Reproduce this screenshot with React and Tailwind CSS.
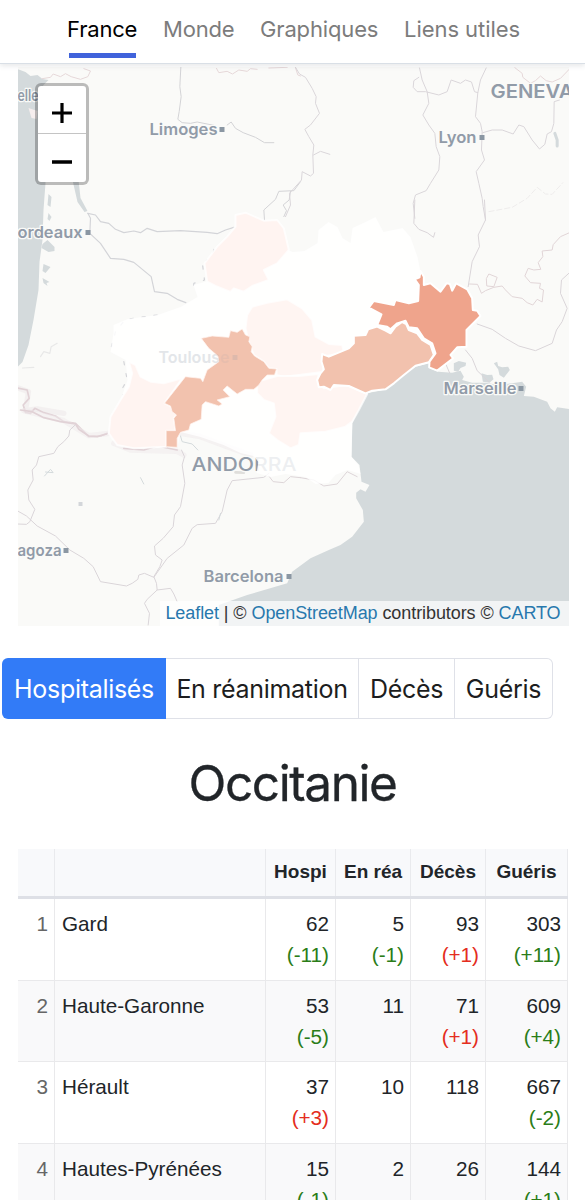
import React from "react";

const navItems = [
  { label: "France", active: true, cls: "w-[70px] tracking-[-0.2px]" },
  { label: "Monde", cls: "w-[71px] tracking-[-0.2px]" },
  { label: "Graphiques", cls: "w-[118px] tracking-[-0.15px]" },
  { label: "Liens utiles", cls: "w-[116px] tracking-[-0.05px]" },
];

const tabs = [
  { label: "Hospitalisés", cls: "w-[164px] rounded-l-md bg-[#327bf7] text-white" },
  { label: "En réanimation", cls: "w-[193px] border-y-[1.5px] border-r-[1.5px] border-[#dfe1e8]" },
  { label: "Décès", cls: "w-[96px] border-y-[1.5px] border-r-[1.5px] border-[#dfe1e8]" },
  { label: "Guéris", cls: "w-[98px] rounded-r-md border-y-[1.5px] border-r-[1.5px] border-[#dfe1e8]" },
];

const G = "text-[#2b7d18]";
const R = "text-[#e42d20]";

const rows = [
  ["Gard", ["62", "(-11)", G], ["5", "(-1)", G], ["93", "(+1)", R], ["303", "(+11)", G]],
  ["Haute-Garonne", ["53", "(-5)", G], ["11"], ["71", "(+1)", R], ["609", "(+4)", G]],
  ["Hérault", ["37", "(+3)", R], ["10"], ["118"], ["667", "(-2)", G]],
  ["Hautes-Pyrénées", ["15", "(-1)", G], ["2"], ["26"], ["144", "(+1)", G]],
];

const gridCols = "grid grid-cols-[37px_211px_70px_75px_75px_82px]";

function Place({ x, y, w, size = 16, children, anchorX, weight = 600 }) {
  return (
    <>
      <text
        x={x}
        y={y}
        fontSize={size}
        fontWeight={weight}
        textLength={w}
        lengthAdjust="spacingAndGlyphs"
        fill="#919ba8"
        stroke="#fafaf8"
        strokeWidth="2.5"
        paintOrder="stroke"
      >
        {children}
      </text>
      {anchorX && <rect x={anchorX} y={y - 8} width="5" height="5" fill="#8b97a3" />}
    </>
  );
}

function RegionMap() {
  return (
    <svg
      viewBox="17.5 67 551 559"
      className="block h-full w-full"
      fontFamily="Inter, 'Open Sans', sans-serif"
      strokeLinejoin="round"
      strokeLinecap="round"
    >
      <rect x="17" y="67" width="552" height="559" fill="#fafaf8" />

      {/* Atlantic, estuary and lakes */}
      <g fill="#d4dadc">
        <path d="M17 69L25 72L30 76L37 75L42 79L48 80L43 85L38 95L45 183L43 210L42 240L39 262L38 290L33 320L28 345L22 362L17 367Z" />
        <path d="M72 180L78 180L80 198L87 211L84 212L77 202Z" />
        <path d="M48 194L51 197L50 207L47 205ZM48 213L51 217L49 221L47 219ZM42 244L47 240L54 247L54 251L48 252L41 248ZM43 264L50 267L45 273L42 271ZM42 278L49 282L46 283L47 286L43 283Z" />
      </g>
      <path d="M28 108L37 111L36 119L31 118Z" fill="#f6eeee" />

      {/* Mediterranean */}
      <g transform="translate(285 200) scale(.33333)" fill="#d4dadc">
        <path d="M200 670L230 610L245 580L300 568L355 525L390 500L430 490L432 505L458 515L500 518L525 512L535 530L530 540L560 548L600 548L640 555L690 548L710 545L722 560L715 588L745 590L785 605L795 625L808 635L815 622L855 628V1278H-200L-200 1215L-115 1185L5 1150L20 1115L75 1075L130 1050L165 1035L200 1010L235 965L232 930L212 895L212 878L225 868L240 875L252 855L228 845L222 795L198 770Z" />
        <path d="M505 490L520 483L542 488L540 498L525 504L518 515L505 512ZM588 520L605 525L620 524L624 538L612 548L592 545ZM625 490L635 485L638 498L650 502L668 500L673 510L655 533L642 525L638 508Z" />
      </g>

      {/* Rivers and borders */}
      <g fill="none" stroke="#d3d3d6" strokeWidth="3" transform="translate(0 0) scale(.33333)">
        <path d="M541 202L538 260L542 290L536 335L532 358L545 368L570 370L590 366L640 376M680 375L692 366L705 385L728 398L765 412L792 428L820 428" />
        <path stroke="#e6d8d9" d="M125 236L150 232L158 222L180 230L195 221L212 230L240 238L262 230L270 213L250 206M648 205L655 218L680 214L696 222L715 210L740 214L750 206L770 208M805 204L860 202M885 203L892 225L900 228" />
        <path d="M900 545L880 572L835 574L825 598L790 630L792 660M870 574L866 600L848 615L858 632L850 650" />
      </g>
      <g fill="none" stroke="#dad6da" strokeWidth="3" transform="translate(285 0) scale(.33333)">
        <path d="M30 202L42 222L60 232L80 265L92 290L90 310L102 340L75 375L58 388L70 410L85 435L82 465L84 520L75 528L50 515L48 540L12 580L15 615L0 650M84 465L105 454L133 463" />
        <path d="M402 204L410 240L425 275L430 310L412 345L430 375L448 400L452 440L463 470L460 510L435 550L422 572L390 585L383 610L388 655" />
        <path d="M400 232L385 242L383 262L395 275L420 275L460 285L485 275L497 240L525 250L540 240L558 246L567 275L577 278L585 240L602 204M577 278L570 350L585 370L590 395L588 450L597 480L572 515L580 550L590 595L593 620L600 660" />
        <path d="M592 398L620 390L650 390L683 402L700 375L715 380L740 420L762 447L778 433L785 402L798 395L805 370L806 305L822 300" />
        <path stroke="#e6d8d9" d="M688 203L710 220L712 232L735 250L750 242L765 228L782 242L800 246L825 235L852 207" />
        <path stroke="#d4dadc" strokeWidth="9" d="M808 400L815 420L815 438" />
        <path stroke="#eeecec" strokeDasharray="16 8" d="M610 635L680 622L725 595L755 562L780 582L800 583L832 548" />
      </g>
      <g fill="none" stroke="#d3d4d8" strokeWidth="3.5" transform="translate(0 200) scale(.33333)">
        <path d="M262 40L285 45L300 65L325 70L345 88L370 98L400 93L420 98L440 85L470 95L540 92L620 97L650 101L675 90L700 82" />
        <path d="M262 40L270 55L268 100L300 130L330 175L370 178L400 187L452 230L462 275L500 280L530 298L556 308" />
        <path strokeDasharray="10 26" d="M640 148L635 175L605 185L612 240L580 250L578 270M470 345L375 358L345 395L330 450M370 485L380 540L360 575L372 592" />
        <path stroke="#ebe5e7" strokeWidth="16" d="M54 564L84 575L75 632L110 627L190 640" opacity=".45" />
        <path stroke="#e1d2d6" strokeWidth="5" d="M50 564L80 570L86 595L68 615L75 637L90 640L103 625L130 638L165 648L190 665L225 670L265 710L300 708L320 700" />
        <path stroke="#e8e8e8" d="M66 504L100 502M120 470L130 455L148 460L152 440L170 430" />
      </g>
      <g fill="none" stroke="#dad5d9" strokeWidth="3" transform="translate(285 200) scale(.33333)">
        <path d="M388 0L385 70L400 88L425 98L444 112L448 98M597 0L600 60L578 105L582 140L560 185L548 260" />
        <path stroke="#e1d5d7" d="M852 98L825 110L803 134L800 150L770 153L772 170L758 188L766 208L745 210L728 205L718 228L735 248L765 250L762 265L774 270L770 306L755 298L742 315L725 308L710 295L680 290L660 270L650 258L625 262L600 272L588 280L576 253L552 252M603 235L610 222L635 232L625 260L605 258Z" />
        <path d="M852 218L828 240L825 280L845 325L830 365L813 390L800 430L750 452L700 438L660 415L620 388L575 372M540 450L560 475L575 512L610 545M480 490L492 518" />
      </g>
      <g fill="none" stroke="#dad5d9" strokeWidth="3" transform="translate(0 410) scale(.33333)">
        <path stroke="#f0e9eb" strokeWidth="16" d="M70 2L190 32L265 77L325 70M340 100L390 120L530 124L550 135M540 70L600 80L680 110L750 135" opacity=".5" />
        <path stroke="#e1d2d6" strokeWidth="5" d="M60 0L95 5L130 23L180 35L225 42L235 58L265 78L290 80L318 72M370 115L430 120L470 108L530 120" />
        <path d="M224 45L208 60L205 78L190 95L172 110L160 130L115 140L108 165L95 180L98 210L82 240L85 270L103 298L88 335L78 343L50 342" />
        <path d="M50 302L78 318L110 348L165 378L208 420L250 445L278 470L300 515L378 528L395 520L412 508L415 495L432 490L460 502L500 445L550 405L575 355L590 344L645 340L665 305L680 240L695 212L790 202L805 190" />
        <path d="M543 120L552 140L545 165L553 220L540 290L522 315L518 350L488 385L462 408L465 435L485 450L478 470L460 500L468 520L470 540L440 568L432 580L447 610L443 645M470 540L510 535L520 552L530 575" />
        <path stroke="#d4dadc" d="M540 78L545 95L575 102L592 120M132 198L150 178L158 188L135 186M420 203L430 222M655 330L660 310" />
        <path stroke="#ddd5d8" d="M805 198L818 215L850 218L870 200L900 203M900 203L940 210L970 228L1010 222L1040 185L1070 200" />
        <path stroke="#dfdedb" strokeWidth="8" d="M705 187L730 188" />
      </g>
      <rect x="78" y="502" width="4" height="4" fill="#d3d6da" />

      {/* Place names */}
      <text x="17" y="101" fontSize="16" fontWeight="600" textLength="21" lengthAdjust="spacingAndGlyphs" fill="#919ba8" stroke="#fafaf8" strokeWidth="2.5" paintOrder="stroke">elle</text>
      <Place x={149} y={135} w={68} anchorX={219}>Limoges</Place>
      <Place x={438} y={143} w={38} anchorX={479}>Lyon</Place>
      <Place x={17} y={238} w={65} anchorX={85}>ordeaux</Place>
      <Place x={158} y={363} w={71} anchorX={232}>Toulouse</Place>
      <Place x={443} y={394} w={73} anchorX={518}>Marseille</Place>
      <Place x={17} y={556} w={44} anchorX={63}>agoza</Place>
      <Place x={203} y={582} w={80} anchorX={286}>Barcelona</Place>
      <Place x={490} y={98} w={83} size={19}>GENEVA</Place>
      <Place x={191} y={471} w={105} size={19} weight={500}>ANDORRA</Place>

      {/* Occitanie */}
      <path
        d="M113 333L113 325L127 319L157 315L180 307L197 297L193 285L207 281L204 263L217 247L227 237L235 227L235 215L263 221L277 220L283 228L288 250L292 252L304 251L317 243L318 230L328 222L337 227L342 238L350 243L352 228L365 222L375 217L383 232L402 228L410 237L417 257L420 272L426 310L428 330L438 350L425 362L393 366L367 393L360 403L352 420L351 457L358 465L360 474L347 470L335 475L328 483L315 484L305 477L285 474L270 477L256 473L258 462L253 456L240 453L223 445L200 437L180 432L177 447L165 447L133 448L117 445L108 433L110 417L120 400L127 380L125 360L110 352Z"
        fill="#ffffff"
        fillOpacity=".84"
      />
      <g transform="translate(0 200) scale(.33333)" fill="#fff4f1" stroke="#fff" strokeOpacity=".75" strokeWidth="6">
        <path d="M705 45L735 38L790 62L830 60L850 85L865 150L830 190L790 210L805 240L755 258L730 275L700 265L690 276L645 258L620 245L612 190L650 140L680 110L705 80Z" />
        <path d="M385 485L405 495L420 530L450 545L490 550L545 535L492 610L510 618L528 645L520 655L525 692L497 692L497 740L400 745L350 735L325 700L330 650L360 600L385 560L395 520Z" />
        <path fillOpacity=".93" d="M755 320L800 308L860 298L905 325L935 360L945 410L985 432L1025 435L1030 458L965 470L970 515L895 525L850 530L828 525L828 507L805 505L790 485L760 465L745 425L735 385L740 345Z" />
        <path fillOpacity=".95" d="M770 545L830 528L895 528L955 522L950 540L970 565L1040 555L1100 582L1075 630L1055 665L1035 680L975 695L900 700L895 735L870 745L830 720L805 700L825 650L820 610L790 600L770 580Z" />
        <path fill="#f2c2ae" stroke="#fff3ef" strokeWidth="3" d="M603 415L635 408L685 412L690 392L710 397L725 387L735 405L748 410L745 425L755 440L752 455L762 468L790 485L805 505L828 507L822 525L800 525L785 540L775 555L760 568L735 568L710 582L680 558L668 570L688 590L650 600L665 612L655 618L615 605L605 615L602 658L570 672L565 690L540 697L530 715L530 742L497 740L497 692L525 692L520 655L528 645L515 635L510 618L492 610L555 530L600 535L607 545L620 510L655 485L652 468L625 445Z" />
      </g>
      <g transform="translate(285 200) scale(.33333)">
        <path fill="#f2c2ae" stroke="#fff" strokeWidth="6" d="M110 462L130 470L190 445L205 430L205 407L240 405L248 388L275 380L300 392L315 400L330 380L350 366L362 372L370 390L395 400L410 420L435 435L445 465L430 487L390 497L355 525L325 550L300 568L260 572L240 580L190 558L145 555L135 570L115 560L100 562L95 540L105 520L115 508L108 485Z" />
        <path fill="#efa48c" stroke="#fff" strokeWidth="6" d="M405 213L415 230L415 255L435 250L465 275L483 250L493 252L500 272L512 250L545 268L560 295L562 330L575 332L585 348L543 390L543 440L515 442L495 465L503 475L455 512L431 502L432 485L450 460L440 430L415 415L395 385L370 382L360 362L335 370L315 388L305 380L275 375L288 343L250 323L265 303L325 315L330 300L370 310L398 303L400 255L388 238L402 232Z" />
      </g>
      <g fill="#8b97a3" opacity=".2">
        <rect x="232" y="355" width="5" height="5" />
      </g>
      <text x="158" y="363" fontSize="16" fontWeight="600" textLength="71" lengthAdjust="spacingAndGlyphs" fill="#919ba8" opacity=".1">Toulouse</text>
    </svg>
  );
}

export default function App() {
  return (
    <div className="flex h-[1200px] w-[585px] flex-col overflow-hidden bg-white font-[Inter,'Open_Sans',sans-serif] text-[#212529]">
      <nav className="relative z-10 flex h-[63.5px] shrink-0 justify-center gap-[26px] border-b-[1.5px] border-[#d9dfe6] bg-white pl-[2px] shadow-[0_2px_5px_rgba(70,80,90,0.13)]">
        {navItems.map((item) => (
          <a
            key={item.label}
            className={`flex h-[58px] flex-col justify-between whitespace-nowrap pt-[13px] text-[22px] leading-[32px] ${item.cls} ${item.active ? "text-black" : "text-[#7c7c7c]"}`}
          >
            <span>{item.label}</span>
            {item.active && <span className="ml-[2px] h-[5px] w-[67px] bg-[#4063db]" />}
          </a>
        ))}
      </nav>

      <section className="relative ml-[17.5px] mt-[3.5px] h-[559px] w-[551px] shrink-0 overflow-hidden">
        <RegionMap />
        <div className="absolute left-[17px] top-[16px] flex h-[102px] w-[54px] flex-col overflow-hidden rounded-[6px] border-[3px] border-black/25 bg-white bg-clip-padding">
          <button className="flex h-[48px] items-center justify-center border-b border-[#c4c4c4] pt-[8px]">
            <svg viewBox="0 0 20 20" className="h-5 w-5" stroke="#000" strokeWidth="3.2"><path d="M0 10H20M10 0V20" /></svg>
          </button>
          <button className="flex h-[49px] items-center justify-center pt-[8px]">
            <svg viewBox="0 0 20 20" className="h-5 w-5" stroke="#000" strokeWidth="3.6"><path d="M0 10H20" /></svg>
          </button>
        </div>
        <div className="absolute bottom-0 right-0 flex h-[25px] w-[409px] items-center justify-end whitespace-pre bg-white/70 pr-[8px] font-['Liberation_Sans',Arial,sans-serif] text-[18px] tracking-[-0.08px] text-[#333]">
          <a className="text-[#2878ad]">Leaflet</a> | © <a className="text-[#2878ad]">OpenStreetMap</a> contributors © <a className="text-[#2878ad]">CARTO</a>
        </div>
      </section>

      <div className="ml-[2px] mt-[32px] flex h-[61px] shrink-0 text-[25px] tracking-[-0.3px] text-[#1c1d20]">
        {tabs.map((tab) => (
          <button key={tab.label} className={`flex items-center justify-center whitespace-nowrap pt-[2px] ${tab.cls}`}>
            {tab.label}
          </button>
        ))}
      </div>

      <h1 className="mt-[34px] h-[60px] shrink-0 text-center text-[49.5px] leading-[60px] tracking-[-1.4px] [-webkit-text-stroke:0.3px_#212529]">Occitanie</h1>

      <div className="ml-[18px] mt-[36px] w-[550px] shrink-0 font-['Liberation_Sans',Arial,sans-serif]">
        <div className={`${gridCols} h-[50px] border-b-[3px] border-[#dee0e6] bg-[#f8f9fb] text-[19px] font-bold`}>
          {["", "", "Hospi", "En réa", "Décès", "Guéris"].map((title, i) => (
            <div key={i} className="flex items-center justify-center whitespace-nowrap border-r-[1.5px] border-[#e9eaed]">{title}</div>
          ))}
        </div>
        {rows.map(([name, ...cells], i) => (
          <div key={name} className={`${gridCols} h-[81.5px] border-b-[1.5px] border-[#e9e9eb] text-[20.7px] leading-[31px] ${i % 2 ? "bg-[#f9f9fa]" : "bg-white"}`}>
            <div className="border-r-[1.5px] border-[#e9e9eb] pr-[6px] pt-[9px] text-right text-[#666]">{i + 1}</div>
            <div className="border-r-[1.5px] border-[#e9e9eb] pl-[7px] pt-[9px]">{name}</div>
            {cells.map(([value, change, tone], j) => (
              <div key={j} className="border-r-[1.5px] border-[#e9e9eb] pr-[6px] pt-[9px] text-right">
                <div>{value}</div>
                {change && <div className={tone}>{change}</div>}
              </div>
            ))}
          </div>
        ))}
      </div>
    </div>
  );
}
